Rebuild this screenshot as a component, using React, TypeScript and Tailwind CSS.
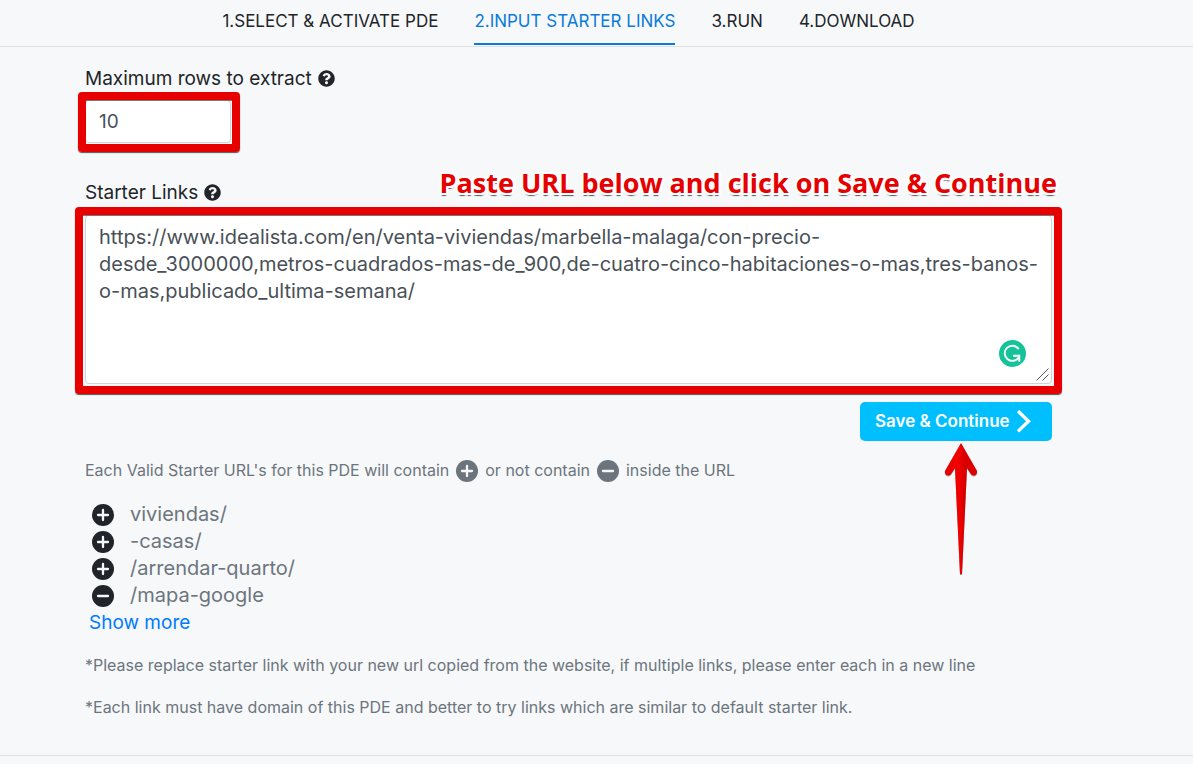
import React from 'react';
import { FaQuestionCircle } from 'react-icons/fa';

const steps = ['1.SELECT & ACTIVATE PDE', '2.INPUT STARTER LINKS', '3.RUN', '4.DOWNLOAD'];

const rules = [
  { include: true, text: 'viviendas/' },
  { include: true, text: '-casas/' },
  { include: true, text: '/arrendar-quarto/' },
  { include: false, text: '/mapa-google' },
];

const starterLink = [
  'https://www.idealista.com/en/venta-viviendas/marbella-malaga/con-precio-',
  'desde_3000000,metros-cuadrados-mas-de_900,de-cuatro-cinco-habitaciones-o-mas,tres-banos-',
  'o-mas,publicado_ultima-semana/',
].join('\n');

function SignIcon({ include }: { include: boolean }) {
  return (
    <svg viewBox="0 0 22 22" className="size-[22px] shrink-0" aria-hidden="true">
      <circle cx="11" cy="11" r="11" fill="currentColor" />
      <path
        d={include ? 'M6 11h10M11 6v10' : 'M6 11h10'}
        stroke="#f7f8fa"
        strokeWidth="2.3"
        strokeLinecap="round"
      />
    </svg>
  );
}

function Highlight({ className }: { className: string }) {
  return (
    <div
      aria-hidden="true"
      className={`pointer-events-none absolute rounded-[4px] border-8 border-[#e60000] shadow-[0_1px_1px_#555,inset_0_1px_0_#777] ${className}`}
    />
  );
}

export default function App() {
  return (
    <div className="min-h-screen bg-[#f7f8fa] font-['Inter',sans-serif] text-[#212529]">
      <nav className="flex justify-center gap-9 border-b border-[#dee2e6] pr-[141px] pl-[85px] text-[17px] leading-6">
        {steps.map((step, i) => (
          <a
            key={step}
            href="#"
            className={
              i === 1
                ? 'mb-px border-b-2 border-[#0a7bdc] pt-[9px] pb-2.5 text-[#0a7bdc]'
                : 'mb-px border-b-2 border-transparent pt-[9px] pb-2.5'
            }
          >
            {step}
          </a>
        ))}
      </nav>

      <main className="border-b border-[#dee2e6] pt-[18px] pr-[141px] pb-[34px] pl-[85px]">
        <div className="flex items-center gap-1.5 text-[19px] leading-[27px]">
          <label htmlFor="max-rows">Maximum rows to extract</label>
          <FaQuestionCircle className="size-[17px]" />
        </div>
        <div className="relative mt-2 w-[146px]">
          <input
            id="max-rows"
            defaultValue="10"
            className="block h-[43px] w-full rounded border border-[#ced4da] bg-white px-[13px] text-[19px] text-[#495057]"
          />
          <Highlight className="-top-2 -right-[9px] -bottom-[9px] -left-[7px]" />
        </div>

        <div className="mt-9 flex items-center gap-1.5 text-[19px] leading-[27px]">
          <label htmlFor="starter-links">Starter Links</label>
          <FaQuestionCircle className="size-[17px]" />
        </div>
        <div className="relative mt-[9px]">
          <textarea
            id="starter-links"
            spellCheck={false}
            defaultValue={starterLink}
            className="block h-[169px] w-full resize-none rounded border border-[#ced4da] bg-white py-2 pr-1 pl-[13px] text-[20px] leading-[27px] text-[#495057]"
          />
          <svg viewBox="0 0 13 13" className="absolute right-[3px] bottom-[3px] size-[13px]" aria-hidden="true">
            <path d="M.5 12.5 12.5.5M6.500 12.500l6-6" stroke="#555" strokeWidth="1" />
          </svg>
          <svg viewBox="0 0 27 27" className="absolute right-[26px] bottom-[17px] size-[27px]" aria-hidden="true">
            <circle cx="13.5" cy="13.5" r="13.5" fill="#15c39a" />
            <path
              d="M19.3 8.6A7.6 7.6 0 1 0 19.8 17.300"
              fill="none"
              stroke="#fff"
              strokeWidth="1.9"
              strokeLinecap="round"
            />
            <path d="M14.800 15.800H20.300V21" fill="none" stroke="#fff" strokeWidth="1.9" strokeLinecap="round" />
          </svg>
          <Highlight className="-top-2 -right-[10px] -bottom-[10px] -left-[10px]" />
          <p className="absolute -right-[5px] bottom-full mb-3.5 font-['Open_Sans','Noto_Sans',sans-serif] text-[27px] leading-9 font-bold whitespace-nowrap text-[#e60000] [text-shadow:2px_0_#fff,-2px_0_#fff,0_2px_#fff,0_-2px_#fff,2px_2px_#fff,-2px_2px_#fff,2px_-2px_#fff,-2px_-2px_#fff,0_3px_1px_#555]">
            Paste URL below and click on Save &amp; Continue
          </p>
        </div>

        <div className="relative mt-[18px] flex justify-end">
          <button
            type="button"
            className="flex h-[39px] w-48 items-center gap-1.5 rounded-[5px] bg-[#00bfff] pl-[15px] text-[17px] font-semibold text-white"
          >
            <span>Save &amp; Continue</span>
            <svg viewBox="0 0 15 24" className="h-6 w-[15px]" aria-hidden="true">
              <path d="M2 1 12.5 11.2 2 21.4" fill="none" stroke="#fff" strokeWidth="3.4" />
            </svg>
          </button>
          <svg viewBox="0 0 34 134" className="absolute top-full right-[74px] mt-px h-[134px] w-[34px]" aria-hidden="true">
            <defs>
              <linearGradient id="arrow-fill" x1="0" x2="1">
                <stop offset="0" stopColor="#e60000" />
                <stop offset=".45" stopColor="#f20000" />
                <stop offset=".6" stopColor="#d60000" />
                <stop offset="1" stopColor="#e00000" />
              </linearGradient>
            </defs>
            <path
              d="M17 2 1.2 29.5C-.4 33 4.3 36.5 7 33L11 27 16 133h2L23 27l4 6c2.7 3.5 7.4 0 5.8-3.5Z"
              fill="#555"
              opacity=".6"
            />
            <path
              d="M17 1 1.2 28.5C-.4 32 4.3 35.5 7 32L11 26 16 132h2L23 26l4 6c2.7 3.5 7.4 0 5.8-3.5Z"
              fill="url(#arrow-fill)"
            />
          </svg>
        </div>

        <p className="mt-4 flex items-center gap-[7px] text-[16px] leading-[27px] text-[#6c757d]">
          Each Valid Starter URL's for this PDE will contain
          <SignIcon include />
          or not contain
          <SignIcon include={false} />
          inside the URL
        </p>

        <ul className="mt-[17px] text-[20px] leading-[27px]">
          {rules.map((rule) => (
            <li key={rule.text} className="flex items-center gap-4 pl-[7px]">
              <SignIcon include={rule.include} />
              <span className="text-[#6c757d]">{rule.text}</span>
            </li>
          ))}
        </ul>
        <a href="#" className="ml-1 block w-fit text-[19px] leading-[27px] text-[#007bff]">
          Show more
        </a>

        <p className="mt-4 text-[16px] leading-[27px] text-[#6c757d]">
          *Please replace starter link with your new url copied from the website, if multiple links, please enter each
          in a new line
        </p>
        <p className="mt-[15px] text-[16px] leading-[27px] text-[#6c757d]">
          *Each link must have domain of this PDE and better to try links which are similar to default starter link.
        </p>
      </main>
    </div>
  );
}
